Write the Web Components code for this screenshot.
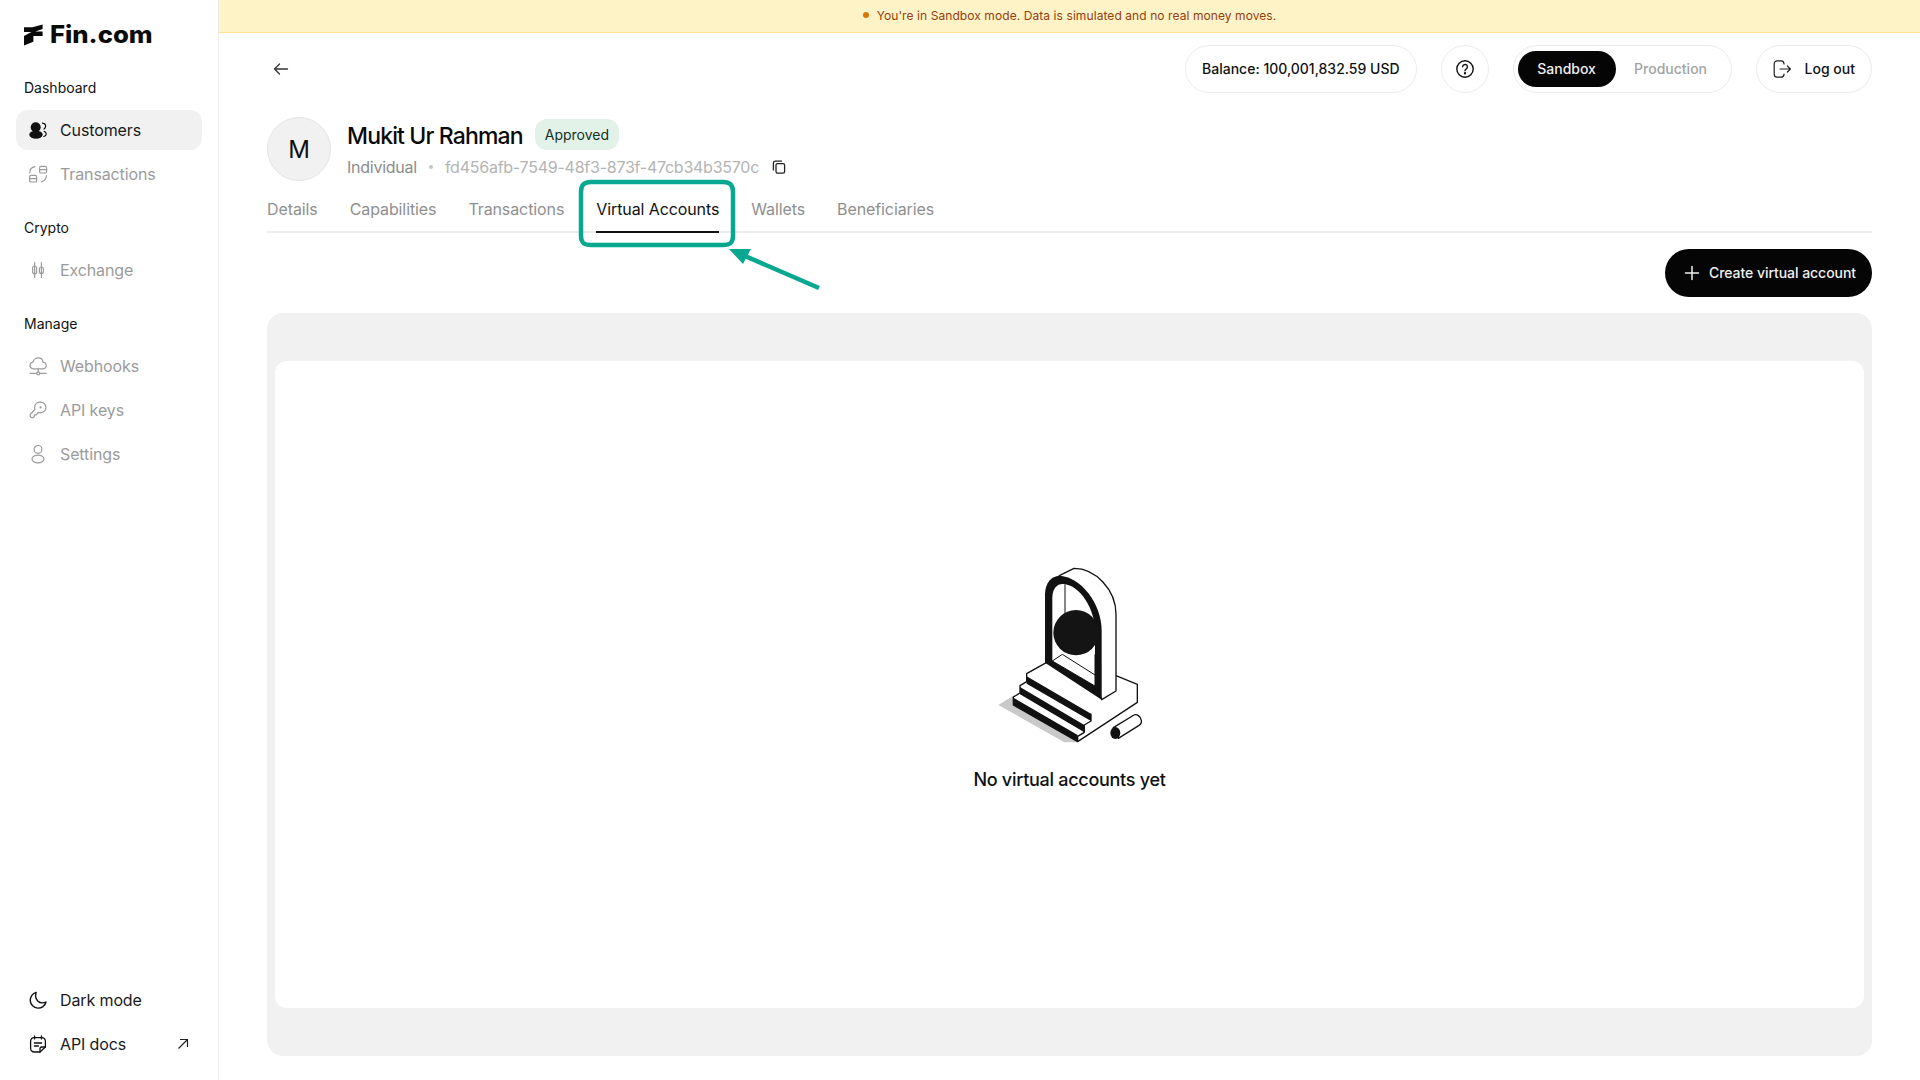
<!DOCTYPE html>
<html lang="en">
<head>
<meta charset="utf-8">
<title>Fin.com - Customer</title>
<style>
  html, body { margin: 0; height: 100%; background: #fff; overflow: hidden; }
  body { font-family: Inter, "Liberation Sans", sans-serif; color: #111; }
</style>
</head>
<body>
<fin-app>
  <fin-sidebar slot="sidebar">
    <nav-label>Dashboard</nav-label>
    <nav-item icon="customers" active>Customers</nav-item>
    <nav-item icon="transactions">Transactions</nav-item>
    <nav-label>Crypto</nav-label>
    <nav-item icon="exchange">Exchange</nav-item>
    <nav-label>Manage</nav-label>
    <nav-item icon="webhooks">Webhooks</nav-item>
    <nav-item icon="keys">API keys</nav-item>
    <nav-item icon="settings">Settings</nav-item>
    <nav-item slot="bottom" icon="moon" strong>Dark mode</nav-item>
    <nav-item slot="bottom" icon="docs" strong external>API docs</nav-item>
  </fin-sidebar>
  <sandbox-banner>You're in Sandbox mode. Data is simulated and no real money moves.</sandbox-banner>
  <main-content>
    <top-bar></top-bar>
    <customer-head name="Mukit Ur Rahman" status="Approved" kind="Individual" uid="fd456afb-7549-48f3-873f-47cb34b3570c"></customer-head>
    <tab-bar></tab-bar>
    <action-row>Create virtual account</action-row>
    <empty-panel>No virtual accounts yet</empty-panel>
  </main-content>
  <tab-callout></tab-callout>
</fin-app>

<script>
const ICONS = {
  customers: `<circle cx="6.7" cy="6.2" r="5" fill="currentColor"/><ellipse cx="7" cy="13.7" rx="6.7" ry="4" fill="currentColor"/>
    <path d="M13.4 2.2c2 .3 3.4 1.8 3.2 3.4-.1 1-.8 1.9-1.6 2.4M15.2 10.4c1.2.5 2 1.3 2 2.5 0 1.2-1 2.2-2.4 2.6" fill="none" stroke="currentColor" stroke-width="1.2" stroke-linecap="round"/>`,
  transactions: `<g fill="none" stroke="currentColor" stroke-width="1.2" stroke-linecap="round"><rect x="10.6" y="1.4" width="7" height="6.6" rx="1.6"/><path d="M10.6 4.7h7"/><rect x=".6" y="10.4" width="7" height="6.6" rx="1.6"/><path d="M.6 13.7h7"/><path d="M.8 7.8c0-3.2 1.8-5.6 5.2-6.2M17.4 10.8c-.2 3-2 5.2-4.8 6"/></g>`,
  exchange: `<g fill="none" stroke="currentColor" stroke-width="1.2" stroke-linecap="round"><path d="M5.6 1.6v15M12.4 1.6v15"/><rect x="3.6" y="5" width="4" height="8" rx="2"/><rect x="10.4" y="6" width="4" height="6.4" rx="2"/></g>`,
  webhooks: `<g fill="none" stroke="currentColor" stroke-width="1.2" stroke-linecap="round" stroke-linejoin="round"><path d="M9.4 .8c2.6 0 4.4 2 4.6 4.4 1.8.2 3.2 1.6 3.2 3.4 0 1.8-1.4 3.2-3.4 3.2H4.6c-2 0-3.6-1.4-3.6-3.2 0-1.8 1.2-3.2 3-3.4.4-2.4 2.8-4.4 5.4-4.4z"/><path d="M9.2 12v4M1.2 16.4h16"/><circle cx="9.2" cy="16.4" r="1.5" fill="#fff"/></g>`,
  keys: `<g fill="none" stroke="currentColor" stroke-width="1.2" stroke-linecap="round" stroke-linejoin="round"><path d="M11.4 1.2c3.2 0 5.6 2.4 5.6 5.2s-2.4 5.4-5.6 5.4c-.8 0-1.4-.2-2-.4l-2.2 2.4H5.4v1.6c-.6 1.2-2.4 1.6-3.4.8-1-.8-1-2.2-.4-3.2l4.4-4.6c-.4-.6-.4-1.2-.4-2 0-3.2 2.6-5.6 6-5.6z"/><circle cx="11.6" cy="6.4" r="1.1" fill="currentColor" stroke="none"/></g>`,
  settings: `<g fill="none" stroke="currentColor" stroke-width="1.2"><circle cx="9" cy="4.4" r="3.9"/><ellipse cx="9" cy="14" rx="6" ry="3.8"/></g>`,
  moon: `<path d="M7.2 1.4a8 8 0 1 0 9.8 9.6c-1 .6-2.2.9-3.4.9A7 7 0 0 1 6.6 5c0-1.2.2-2.4.6-3.6z" fill="none" stroke="currentColor" stroke-width="1.4" stroke-linejoin="round"/>`,
  docs: `<g fill="none" stroke="currentColor" stroke-width="1.3" stroke-linecap="round" stroke-linejoin="round"><path d="M11 17H5.4A3.6 3.6 0 0 1 1.6 13.4V6.2a3.6 3.6 0 0 1 3.8-3.6h7.2a3.6 3.6 0 0 1 3.8 3.6V12z"/><path d="M5.6.9v3M12.4.9v3M5.4 8h7.2M5.4 11h4M11 17v-3.4A1.6 1.6 0 0 1 12.6 12h3.8"/></g>`
};

class FinApp extends HTMLElement {
  connectedCallback() {
    this.attachShadow({ mode: 'open' });
    this.shadowRoot.innerHTML = `
      <style>
        :host { display: flex; width: 1920px; height: 1080px; position: relative; overflow: hidden; }
        .main { flex: 1; min-width: 0; display: flex; flex-direction: column; }
      </style>
      <slot name="sidebar"></slot>
      <div class="main"><slot></slot></div>
    `;
  }
}

class FinSidebar extends HTMLElement {
  connectedCallback() {
    this.attachShadow({ mode: 'open' });
    this.shadowRoot.innerHTML = `
      <style>
        :host { display: flex; flex-direction: column; flex: none; width: 219px; box-sizing: border-box; height: 1080px;
          padding: 24px 16px 16px; border-right: 1px solid #ececec; background: #fff; }
        .logo { display: flex; align-items: center; gap: 7px; height: 22px; padding-left: 8px; margin-bottom: 32px; }
        .logo svg { width: 19px; height: 22px; flex: none; }
        .word { display: inline-block; font-size: 24px; font-weight: 800; line-height: 22px; color: #0a0a0a; transform: scaleX(1.07); transform-origin: left center; }
        .top { flex: 1; display: flex; flex-direction: column; gap: 4px; }
        .bottom { display: flex; flex-direction: column; gap: 4px; }
      </style>
      <div class="logo">
        <svg viewBox="0 0 19 22"><path fill="#0a0a0a" d="M0 3.2H8.5L18.6 .4V5L11.4 7.4H18.6V12H9.4V17.8L0 21.6V12L7.4 8H0z"/></svg>
        <span class="word">Fin.com</span>
      </div>
      <div class="top"><slot></slot></div>
      <div class="bottom"><slot name="bottom"></slot></div>
    `;
  }
}

class NavLabel extends HTMLElement {
  connectedCallback() {
    this.attachShadow({ mode: 'open' });
    this.shadowRoot.innerHTML = `
      <style>
        :host { display: block; padding-left: 8px; margin: 20px 0 8px; font-size: 14px; line-height: 20px; font-weight: 400; color: #111; }
        :host(:first-child) { margin-top: 0; }
      </style>
      <slot></slot>
    `;
  }
}

class NavItem extends HTMLElement {
  connectedCallback() {
    const active = this.hasAttribute('active');
    const dark = active || this.hasAttribute('strong');
    this.attachShadow({ mode: 'open' });
    this.shadowRoot.innerHTML = `
      <style>
        :host { display: flex; align-items: center; gap: 12px; height: 40px; padding: 0 12px; border-radius: 12px;
          font-size: 16px; letter-spacing: -.12px; color: ${dark ? '#1a1a1a' : '#9b9b9b'}; background: ${active ? '#f1f1f1' : 'transparent'}; }
        svg.ic { width: 20px; height: 20px; flex: none; color: ${dark ? '#111' : '#9b9b9b'}; }
        .out { margin-left: auto; width: 12px; height: 12px; margin-right: 1px; }
      </style>
      <svg class="ic" viewBox="-1 -1 20 20">${ICONS[this.getAttribute('icon')]}</svg>
      <slot></slot>
      ${this.hasAttribute('external') ? '<svg class="out" viewBox="0 0 12 12" fill="none" stroke="#222" stroke-width="1.2"><path d="M1.5 10.5l9-9M3 1.5h7.5V9"/></svg>' : ''}
    `;
  }
}

class SandboxBanner extends HTMLElement {
  connectedCallback() {
    this.attachShadow({ mode: 'open' });
    this.shadowRoot.innerHTML = `
      <style>
        :host { display: flex; align-items: center; justify-content: center; gap: 8px; flex: none; box-sizing: border-box; height: 33px; padding-bottom: 2px;
          background: #fef3c7; border-bottom: 1px solid #fde68a; font-size: 12px; letter-spacing: .08px; color: #92400e; }
        i { width: 6px; height: 6px; border-radius: 50%; background: #d97706; }
      </style>
      <i></i><span><slot></slot></span>
    `;
  }
}

class MainContent extends HTMLElement {
  connectedCallback() {
    this.attachShadow({ mode: 'open' });
    this.shadowRoot.innerHTML = `
      <style>
        :host { display: flex; flex-direction: column; flex: 1; min-height: 0; padding: 12px 48px 24px; }
      </style>
      <slot></slot>
    `;
  }
}

class TopBar extends HTMLElement {
  connectedCallback() {
    this.attachShadow({ mode: 'open' });
    this.shadowRoot.innerHTML = `
      <style>
        :host { display: flex; align-items: center; gap: 24px; height: 48px; flex: none; font-size: 14px; font-weight: 450; color: #111; }
        .back { width: 16px; height: 16px; margin: 0 auto 0 6px; }
        .pill { display: flex; align-items: center; box-sizing: border-box; height: 48px; padding-bottom: 1px; border: 1px solid #ececec; border-radius: 24px; }
        .balance { padding: 0 16px 1px; }
        .help { width: 48px; justify-content: center; padding: 0; }
        .help svg { width: 20px; height: 20px; }
        .mode { padding: 0 5px 0 4px; width: 219px; }
        .mode span { display: flex; align-items: center; justify-content: center; height: 36px; padding-bottom: 1px; box-sizing: border-box; border-radius: 18px; }
        .on { background: #050505; color: #eee; width: 98px; }
        .off { color: #a3a3a3; flex: 1; }
        .logout { padding: 0 16px 1px 15px; gap: 13px; }
        .logout svg { width: 20px; height: 20px; }
      </style>
      <svg class="back" viewBox="0 0 16 16" fill="none" stroke="#333" stroke-width="1.3" stroke-linecap="round" stroke-linejoin="round"><path d="M14.5 8h-13M6.5 3l-5 5 5 5"/></svg>
      <div class="pill balance">Balance: 100,001,832.59 USD</div>
      <div class="pill help"><svg viewBox="0 0 20 20" fill="none" stroke="#111" stroke-width="1.4"><circle cx="10" cy="10" r="8.2"/><path d="M7.6 7.8a2.4 2.4 0 1 1 3.8 2c-.9.6-1.4 1-1.4 2" stroke-linecap="round"/><circle cx="10" cy="14.2" r=".5" fill="#111"/></svg></div>
      <div class="pill mode"><span class="on">Sandbox</span><span class="off">Production</span></div>
      <div class="pill logout"><svg viewBox="0 0 20 20" fill="none" stroke="#222" stroke-width="1.2" stroke-linecap="round" stroke-linejoin="round"><path d="M12 5V4.6A3 3 0 0 0 9 1.8H5.2A3 3 0 0 0 2.2 4.8v10.4a3 3 0 0 0 3 3H9a3 3 0 0 0 3-2.8V15M8 10h10.4M15.4 7l3 3-3 3"/></svg>Log out</div>
    `;
  }
}

class CustomerHead extends HTMLElement {
  connectedCallback() {
    const name = this.getAttribute('name');
    this.attachShadow({ mode: 'open' });
    this.shadowRoot.innerHTML = `
      <style>
        :host { display: flex; align-items: center; gap: 16px; flex: none; margin-top: 24px; }
        .avatar { width: 64px; height: 64px; box-sizing: border-box; border: 1px solid #e4e4e4; border-radius: 50%; background: #f1f1f1;
          display: flex; align-items: center; justify-content: center; font-size: 24px; color: #111; }
        .title { display: flex; align-items: center; gap: 12px; height: 32px; }
        h1 { margin: 0; padding-top: 2px; font-size: 23px; font-weight: 500; letter-spacing: -.85px; color: #0a0a0a; }
        .badge { height: 31px; box-sizing: border-box; padding: 0 10px 1px; margin-top: -1px; display: flex; align-items: center; background: #e3f2e9; border-radius: 12px; font-size: 14px; color: #14301f; }
        .sub { display: flex; align-items: center; height: 24px; margin-top: 4px; font-size: 16px; letter-spacing: -.25px; color: #8c8c8c; }
        .dot { width: 4px; height: 4px; border-radius: 50%; background: #c4c4c4; margin: 0 12px; }
        .uid { color: #b4b4b4; }
        svg { width: 16px; height: 16px; margin-left: 12px; }
      </style>
      <div class="avatar">${name[0]}</div>
      <div>
        <div class="title"><h1>${name}</h1><span class="badge">${this.getAttribute('status')}</span></div>
        <div class="sub">${this.getAttribute('kind')}<span class="dot"></span><span class="uid">${this.getAttribute('uid')}</span>
          <svg viewBox="0 0 16 16" fill="none" stroke="#222" stroke-width="1.3" stroke-linejoin="round"><rect x="5" y="4.6" width="8.6" height="9.6" rx="1.6"/><path d="M11 2.2H4.2A1.8 1.8 0 0 0 2.4 4v7.4"/></svg>
        </div>
      </div>
    `;
  }
}

class TabBar extends HTMLElement {
  connectedCallback() {
    const tabs = ['Details', 'Capabilities', 'Transactions', 'Virtual Accounts', 'Wallets', 'Beneficiaries'];
    this.attachShadow({ mode: 'open' });
    this.shadowRoot.innerHTML = `
      <style>
        :host { display: flex; gap: 32px; flex: none; margin-top: 5px; border-bottom: 2px solid #ececec; font-size: 16px; letter-spacing: -.1px; color: #8f8f8f; }
        span { display: block; padding: 12px 0 11px; line-height: 22px; margin-bottom: -2px; border-bottom: 2px solid transparent; }
        .on { color: #111; border-bottom-color: #111; }
      </style>
      ${tabs.map(t => `<span class="${t === 'Virtual Accounts' ? 'on' : ''}">${t}</span>`).join('')}
    `;
  }
}

class ActionRow extends HTMLElement {
  connectedCallback() {
    this.attachShadow({ mode: 'open' });
    this.shadowRoot.innerHTML = `
      <style>
        :host { display: flex; justify-content: flex-end; flex: none; margin-top: 16px; }
        .btn { display: flex; align-items: center; gap: 9px; height: 48px; box-sizing: border-box; padding: 0 16px 1px 19px; border-radius: 24px; background: #050505; color: #f0f0f0; font-size: 14px; font-weight: 450; letter-spacing: -.05px; }
        svg { width: 16px; height: 16px; }
      </style>
      <div class="btn"><svg viewBox="0 0 16 16" stroke="#f0f0f0" stroke-width="1.5" stroke-linecap="round"><path d="M8 1.5v13M1.5 8h13"/></svg><slot></slot></div>
    `;
  }
}

class EmptyPanel extends HTMLElement {
  connectedCallback() {
    this.attachShadow({ mode: 'open' });
    this.shadowRoot.innerHTML = `
      <style>
        :host { display: flex; flex: 1; min-height: 0; margin-top: 16px; padding: 48px 8px; border-radius: 16px; background: #f1f1f1; }
        .inner { flex: 1; display: flex; flex-direction: column; align-items: center; justify-content: center; padding-bottom: 26px; border-radius: 12px; background: #fff; }
        svg { width: 180px; height: 200px; margin-bottom: 16px; }
        p { margin: 0; font-size: 18px; line-height: 26px; font-weight: 500; letter-spacing: -.28px; color: #111; }
      </style>
      <div class="inner">
        <svg viewBox="0 0 540 600" stroke-linejoin="round">
          <path fill="#c9c9c9" d="M55 462l48-30v30l190 112-40 0z"/>
          <!-- base block -->
          <path fill="#fff" stroke="#111" stroke-width="4" d="M140 368L247 308 472 400V454L293 572 100 462V438L120 426V404L140 392z"/>
          <!-- steps -->
          <path fill="#111" d="M140 376L333 488V510L140 398zM120 408L313 522V544L120 430zM100 440L293 552V572L100 462z"/>
          <path fill="none" stroke="#111" stroke-width="4" d="M333 488V510L313 522V544L293 556V572"/>
          <!-- arch outer side -->
          <path fill="#fff" stroke="#111" stroke-width="4" d="M238 74L282 52C345 52 408 115 408 190V420L365 446 300 200z"/>
          <!-- arch front -->
          <path fill="#111" d="M195 335V130C195 95 215 75 238 74C300 76 365 155 365 240V446L195 335z"/>
          <!-- opening -->
          <path fill="#fff" d="M217 328V140C217 112 232 98 250 99C300 102 345 175 345 240V405z"/>
          <path fill="#fff" stroke="#111" stroke-width="3" d="M217 330L247 310 345 372V405z"/>
          <path fill="none" stroke="#111" stroke-width="3" d="M255 100V190M345 310V372"/>
          <circle cx="288" cy="245" r="68" fill="#141414"/>
          <!-- roller -->
          <path fill="#fff" stroke="#111" stroke-width="4" d="M400 530L462 492C470 488 482 496 484 508 486 516 482 520 476 524L415 562z"/>
          <ellipse cx="406" cy="546" rx="15" ry="18" fill="#111"/>
        </svg>
        <p><slot></slot></p>
      </div>
    `;
  }
}

class TabCallout extends HTMLElement {
  connectedCallback() {
    this.attachShadow({ mode: 'open' });
    this.shadowRoot.innerHTML = `
      <style>
        :host { position: absolute; left: 0; top: 0; width: 1920px; height: 1080px; pointer-events: none; }
        svg { width: 100%; height: 100%; display: block; }
      </style>
      <svg viewBox="0 0 1920 1080" fill="none" stroke="#07a88f" stroke-width="4.5">
        <path d="M591 182H723C730 182 733 185 733 192V236C733 243 730 245 723 245H591C584 245 581 243 581 236V192C581 185 584 182 591 182Z"/>
        <path d="M819 288L738 253" stroke-width="4.5"/>
        <path fill="#07a88f" stroke="none" d="M729 249L751 249 743 264z"/>
      </svg>
    `;
  }
}

customElements.define('fin-app', FinApp);
customElements.define('fin-sidebar', FinSidebar);
customElements.define('nav-label', NavLabel);
customElements.define('nav-item', NavItem);
customElements.define('sandbox-banner', SandboxBanner);
customElements.define('main-content', MainContent);
customElements.define('top-bar', TopBar);
customElements.define('customer-head', CustomerHead);
customElements.define('tab-bar', TabBar);
customElements.define('action-row', ActionRow);
customElements.define('empty-panel', EmptyPanel);
customElements.define('tab-callout', TabCallout);
</script>
</body>
</html>
